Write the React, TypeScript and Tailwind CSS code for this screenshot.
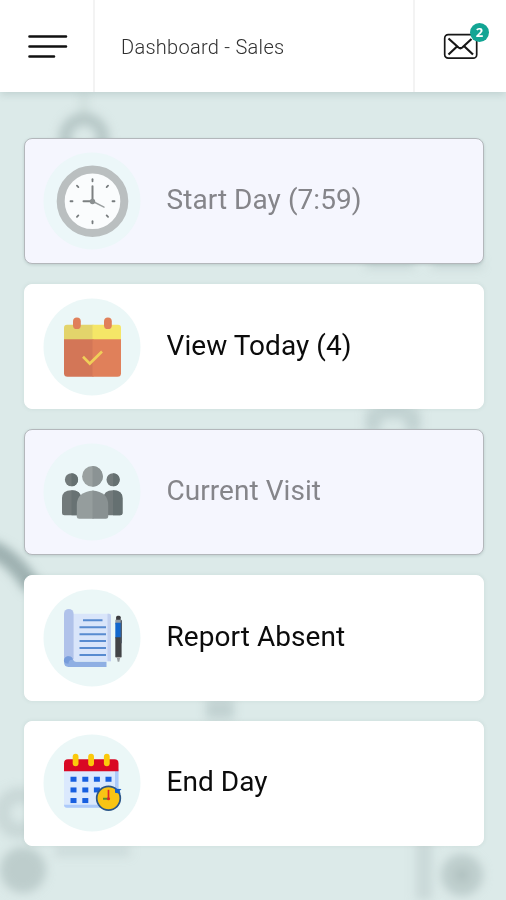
import type { ReactNode } from "react";
import clsx from "clsx";

interface MenuCardProps {
  label: string;
  icon: ReactNode;
  disabled?: boolean;
}

function ClockIcon() {
  const ticks = [0, 45, 90, 135, 180, 225, 270, 315];
  return (
    <g>
      <circle cx="48" cy="48" r="31.8" fill="#fafcfd" stroke="#babfc0" strokeWidth="8" />
      {ticks.map((angle) => (
        <path
          key={angle}
          d="M48 26v2"
          stroke="#767b7d"
          strokeWidth="1.8"
          strokeLinecap="round"
          transform={`rotate(${angle} 48 48)`}
        />
      ))}
      <path d="M48 48L59.500 53.800" stroke="#999e9f" strokeWidth="1.500" strokeLinecap="round" />
      <path d="M48 48V33M48 48H39" stroke="#7c8081" strokeWidth="2" strokeLinecap="round" />
      <circle cx="48" cy="48.300" r="2.700" fill="#8a8f90" />
    </g>
  );
}

function CalendarCheckIcon() {
  return (
    <g>
      <path d="M19.500 41V28.500q0-3 3-3H49V41z" fill="#e3d46b" />
      <path d="M48 25.500h25.500q3 0 3 3V41H48z" fill="#f5e667" />
      <path d="M19.500 40H49v37.500H23q-3.500 0-3.500-3.500z" fill="#d37657" />
      <path d="M48 40h28.500v34q0 3.500-3.500 3.500H48z" fill="#e0805a" />
      <rect x="28.500" y="18.200" width="7.800" height="11.600" rx="3.900" fill="#e0805a" />
      <rect x="59.500" y="18.200" width="7.800" height="11.600" rx="3.900" fill="#e0805a" />
      <path d="M38.500 57.500l6.800 6.800L57.500 52.300" fill="none" stroke="#f0cf59" strokeWidth="2.600" />
    </g>
  );
}

function PeopleIcon() {
  return (
    <g>
      <circle cx="27" cy="35.500" r="6.600" fill="#727a7b" />
      <path d="M27 28.900a6.600 6.600 0 0 1 0 13.200z" fill="#657071" />
      <circle cx="68.600" cy="35.500" r="6.600" fill="#727a7b" />
      <path d="M68.600 28.900a6.600 6.600 0 0 1 0 13.200z" fill="#657071" />
      <path d="M17.500 68.500V54q0-8 9.500-8t9.500 8v17H20q-2.500 0-2.500-2.500z" fill="#727a7b" />
      <path d="M27 46q9.500 0 9.500 8v17H27z" fill="#687273" />
      <path d="M59 71V54q0-8 9.500-8t9.500 8v14.500q0 2.500-2.500 2.500z" fill="#727a7b" />
      <path d="M68.500 46q9.500 0 9.500 8v14.500q0 2.500-2.500 2.500h-7z" fill="#657071" />
      <circle cx="48" cy="32.200" r="10.400" fill="#9aa1a1" />
      <path d="M48 21.800a10.400 10.400 0 0 1 0 20.800z" fill="#8b9394" />
      <path d="M49 46.200q-16.700 1.300-16.700 14.500V72q0 2.500 2.500 2.500H49z" fill="#959d9d" />
      <path d="M48 46.200q15.700 1.300 15.700 14.500V72q0 2.500-2.500 2.500H48z" fill="#899192" />
    </g>
  );
}

function ReportIcon() {
  return (
    <g>
      <path d="M28 23.500h36.500q2 0 2 2V71H28z" fill="#d9e5fa" />
      <path d="M63 23.500h1.500q2 0 2 2V71H63z" fill="#c2d0ef" />
      <path d="M19.500 71V23.500a4.800 4.800 0 0 1 9.600 0V69z" fill="#b0c2ea" />
      <path d="M19.500 71.500a4.600 4.600 0 0 1 9-2q1 2 3 2H62v5.200H24q-4.500 0-4.500-5.200z" fill="#8fafe3" />
      <path d="M19.500 71.500a4.600 4.600 0 0 1 9-2q-4.500-.5-4.500 4-3 0-4.500-2z" fill="#779cdb" />
      <path
        d="M38.500 30h19.500M35 37h26.500M35 44h26.500M35 50.700h26.500M35 57.700h26.500M35 64.700h26.500"
        stroke="#588bd0"
        strokeWidth="1.900"
      />
      <path d="M72 66h4l-1.200 5.500h-1.600z" fill="#9a9fa3" />
      <rect x="71.600" y="25.500" width="4.600" height="5" rx="1.500" fill="#3c3c40" />
      <path d="M70.800 29.500h6.300V34h-6.300z" fill="#939ba2" />
      <path d="M70.800 32.500h6.300V48h-6.300z" fill="#1167cd" />
      <path d="M70.800 47h6.300v20h-6.300z" fill="#414346" />
      <path d="M76.800 30v23" stroke="#555d68" strokeWidth="1.300" />
      <path d="M71.500 67.200h5" stroke="#aaa" />
    </g>
  );
}

function CalendarClockIcon() {
  const cells = [
    [26, 41.5], [37.8, 41.5], [49.4, 41.5], [61, 41.5],
    [26, 52.2], [37.8, 52.2], [49.4, 52.2],
    [26, 62.8], [37.8, 62.8],
  ];
  return (
    <g>
      <path d="M19.500 34h54.500v35.500q0 3-3 3H22.500q-3 0-3-3z" fill="#dbe9fd" />
      <path d="M70.500 34H74v35.500q0 3-3 3H22.500q-3 0-3-3h48q3 0 3-3z" fill="#accafa" />
      <path d="M19.500 36v-8q0-4 4-4H70q4 0 4 4v8z" fill="#d90824" />
      {[28.2, 43.7, 59.4].map((x) => (
        <rect key={x} x={x} y="18.500" width="5.800" height="12.500" rx="2.900" fill="#fbc90b" />
      ))}
      {cells.map(([x, y]) => (
        <rect key={`${x}-${y}`} x={x} y={y} width="6" height="5" fill="#175fe0" />
      ))}
      <circle cx="64" cy="63" r="11.800" fill="#f9c414" stroke="#2a5588" strokeWidth="1.700" />
      <path d="M70.500 53.500l6.500.3-1.800 1.700.8 3-5.500-1z" fill="#165fc7" />
      <path d="M64 63.500h-5.500" stroke="#58902b" strokeWidth="2" />
      <path d="M64 64v-9.500" stroke="#e12428" strokeWidth="1.700" />
      <circle cx="64" cy="63.500" r="1.600" fill="#e12428" />
    </g>
  );
}

function MenuCard({ label, icon, disabled }: MenuCardProps) {
  return (
    <button
      disabled={disabled}
      className={clsx(
        "flex w-full items-center rounded-[8px] border pl-[19.5px] text-left text-[28px] tracking-[0.05px]",
        disabled
          ? "h-[126px] border-[#b3b7bb] bg-[#f5f6fe] text-[#85858a] shadow-[0_1px_3px_rgba(70,95,95,0.2)]"
          : "h-[125.5px] border-white bg-white text-[#0b0b0b] shadow-[0_0_4px_rgba(90,120,118,0.12)]"
      )}
    >
      <svg viewBox="0 0 96 96" className="h-24 w-24 shrink-0 overflow-visible">
        <circle cx="48" cy="48" r="48.5" fill={disabled ? "#ecf7f9" : "#ebf7f7"} />
        <g transform="translate(0.5 0.25)">{icon}</g>
      </svg>
      <span className="-mt-0.5 ml-[26.5px] whitespace-nowrap">{label}</span>
    </button>
  );
}

function Backdrop() {
  return (
    <svg
      viewBox="0 0 506 900"
      className="pointer-events-none absolute inset-0 -z-10 h-[900px] w-[506px]"
    >
      <defs>
        <filter id="soft" x="-50%" y="-50%" width="200%" height="200%">
          <feGaussianBlur stdDeviation="5" />
        </filter>
      </defs>
      <rect width="506" height="900" fill="#dceae9" />
      <g filter="url(#soft)" fill="none" stroke="#b7c8c7">
        <circle cx="84" cy="138" r="19" strokeWidth="13" />
        <path d="M84 92v24" strokeWidth="8" opacity=".35" />
        <path d="M366 264h48M432 264h50" strokeWidth="7" opacity=".7" />
        <path d="M373 432v-16q20-10 40 0v16" strokeWidth="15" opacity=".7" />
        <path d="M-12 548Q12 555 33 588" stroke="#9eb1b1" strokeWidth="18" />
        <path d="M206 709h28" strokeWidth="20" opacity=".7" />
        <circle cx="20" cy="813" r="18" strokeWidth="16" opacity=".5" />
        <circle cx="23" cy="870" r="23" fill="#bdcdcc" stroke="none" />
        <path d="M55 851h75" strokeWidth="10" opacity=".45" />
        <path d="M424 840v60" stroke="#c3d2d1" strokeWidth="17" opacity=".7" />
        <circle cx="462" cy="875" r="21" fill="#bdcdcc" stroke="none" />
        <circle cx="462" cy="875" r="5" fill="#a8b9b8" stroke="none" />
      </g>
    </svg>
  );
}

function Header() {
  return (
    <header className="flex h-[92px] bg-white shadow-[0_2px_8px_rgba(70,100,98,0.2)]">
      <button aria-label="Menu" className="flex w-[95px] items-center border-r-2 border-[#f3f3f3] pl-7">
        <svg viewBox="0 0 40 26" className="h-[26px] w-10" stroke="#111" strokeWidth="2.600" strokeLinecap="round">
          <path d="M1.500 3.500h36.500M1.500 13.500h36.500M1.500 23.500h24.500" />
        </svg>
      </button>
      <h1 className="flex flex-1 items-center pt-px pl-[26px] text-[20px] font-light tracking-[0.28px] text-[#303030]">
        Dashboard - Sales
      </h1>
      <button aria-label="Messages" className="flex w-[93px] items-center border-l-2 border-[#f3f3f3] pl-7">
        <span className="relative">
          <svg viewBox="0 0 36 28" className="h-7 w-9" fill="none" stroke="#171717" strokeWidth="1.700">
            <rect x="1.700" y="2.700" width="32" height="23.500" rx="3.500" />
            <path d="M5.500 6.500l10 9q1.900 1.500 3.800 0L28.500 7M5.500 22.500l8.500-8M30 22.500l-8.500-8" strokeWidth="2.200" />
          </svg>
          <span className="absolute -top-[9px] left-[27px] flex h-[19px] w-[19px] items-center justify-center rounded-full bg-[#12a594] font-['Open_Sans',sans-serif] text-[13px] font-bold text-white">
            2
          </span>
        </span>
      </button>
    </header>
  );
}

export default function App() {
  return (
    <div className="relative isolate h-[900px] w-[506px] overflow-hidden font-[Roboto,sans-serif]">
      <Backdrop />
      <Header />
      <main className="flex flex-col gap-[19.9px] pl-[23.5px] pr-[22px] pt-[46px]">
        <MenuCard label="Start Day (7:59)" icon={<ClockIcon />} disabled />
        <MenuCard label="View Today (4)" icon={<CalendarCheckIcon />} />
        <MenuCard label="Current Visit" icon={<PeopleIcon />} disabled />
        <MenuCard label="Report Absent" icon={<ReportIcon />} />
        <MenuCard label="End Day" icon={<CalendarClockIcon />} />
      </main>
    </div>
  );
}
